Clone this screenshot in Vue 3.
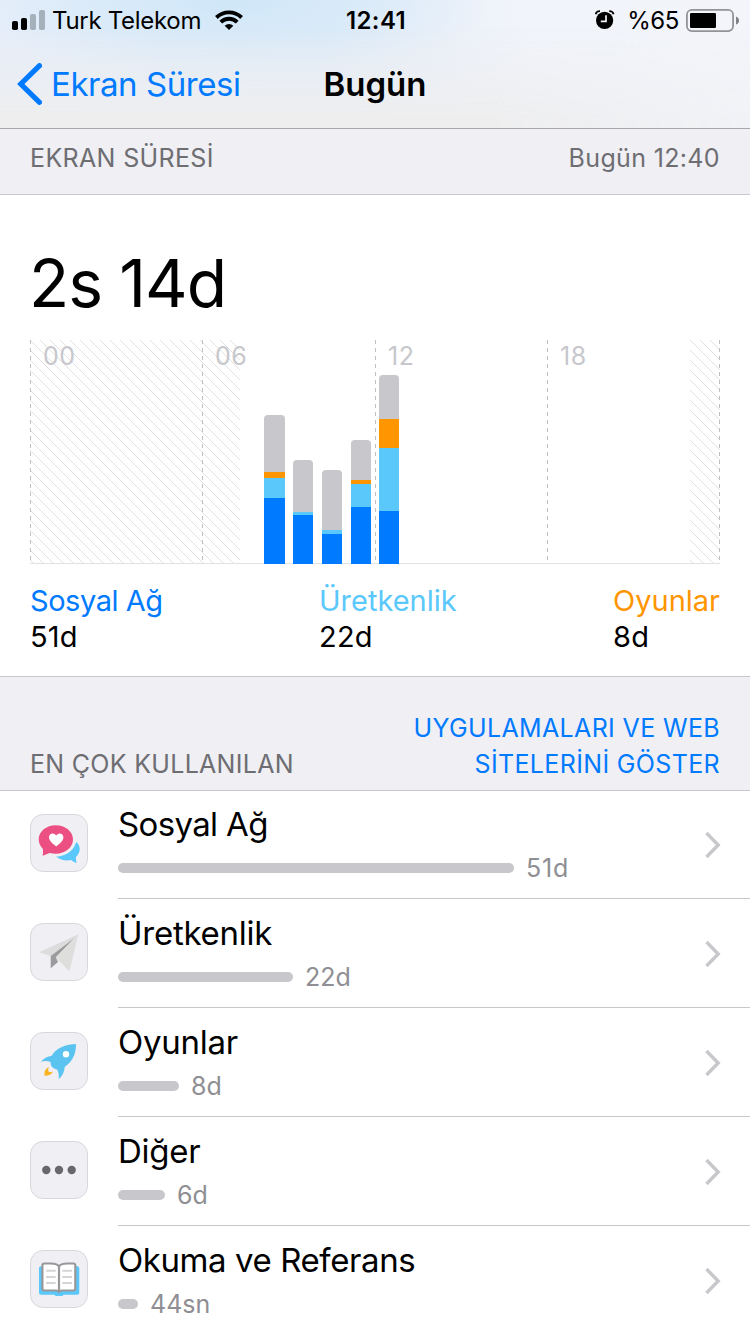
<script setup>
const hours = [
  { x: 0.5, label: '00' },
  { x: 172.5, label: '06' },
  { x: 345.5, label: '12' },
  { x: 517.5, label: '18' },
  { x: 689.5, label: '' },
]

const colors = { other: '#c7c7cc', games: '#ff9500', work: '#5ac8fa', social: '#007aff' }

const bars = [
  { x: 234, w: 21, other: 57, games: 6, work: 20, social: 66 },
  { x: 263, w: 20, other: 52, games: 0, work: 3, social: 49 },
  { x: 292, w: 20, other: 60, games: 0, work: 4, social: 30 },
  { x: 321, w: 20, other: 40, games: 4, work: 23, social: 57 },
  { x: 349, w: 20, other: 44, games: 29, work: 63, social: 53 },
].map((b) => {
  let y = 224
  const segments = ['social', 'work', 'games'].filter((k) => b[k]).map((k) => {
    y -= b[k]
    return { y, h: b[k], fill: colors[k] }
  })
  const top = y - b.other
  const cap = `M${b.x} ${y}V${top + 4}q0-4 4-4h${b.w - 8}q4 0 4 4V${y}z`
  return { ...b, segments, cap }
})

const legend = [
  { name: 'Sosyal Ağ', time: '51d', kind: 'social' },
  { name: 'Üretkenlik', time: '22d', kind: 'work' },
  { name: 'Oyunlar', time: '8d', kind: 'games' },
]

const rows = [
  { name: 'Sosyal Ağ', time: '51d', width: 396, icon: 'chat' },
  { name: 'Üretkenlik', time: '22d', width: 175, icon: 'plane' },
  { name: 'Oyunlar', time: '8d', width: 61, icon: 'rocket' },
  { name: 'Diğer', time: '6d', width: 47, icon: 'dots' },
  { name: 'Okuma ve Referans', time: '44sn', width: 20, icon: 'book' },
]
</script>

<template>
  <div class="screen">
    <header class="top">
      <div class="status">
        <div class="side">
          <svg class="signal" width="33" height="20" viewBox="0 0 33 20">
            <rect x="0" y="11" width="6" height="9" rx="1.8" />
            <rect x="9" y="8" width="6" height="12" rx="1.8" />
            <rect x="18" y="4" width="6" height="16" rx="1.8" fill="#a5b1bb" />
            <rect x="27" y="0" width="6" height="20" rx="1.8" fill="#a5b1bb" />
          </svg>
          <span class="carrier">Turk Telekom</span>
          <svg class="wifi" width="28" height="20" viewBox="0 0 28 20">
            <g fill="none" stroke="#000" stroke-width="3.9">
              <path d="M1.4 7.500a18 18 0 0 1 25.200 0" />
              <path d="M5.800 12.200a11.600 11.600 0 0 1 16.400 0" />
            </g>
            <path d="M14 20l-4.300-4.200a6.100 6.100 0 0 1 8.600 0z" />
          </svg>
        </div>
        <span class="clock">12:41</span>
        <div class="side right">
          <svg class="alarm" width="20" height="20" viewBox="0 0 20 20">
            <circle cx="9.6" cy="10.4" r="8.6" />
            <path d="M.6 4.2Q1.5 1 5 1.1M18.6 4.2Q17.7 1 14.2 1.1" fill="none" stroke="#000" stroke-width="1.7" />
            <path d="M11 5.2v6.2H5.8" fill="none" stroke="#f3f5f9" stroke-width="1.7" />
          </svg>
          <span class="percent">%65</span>
          <svg class="battery" width="54" height="24" viewBox="0 0 54 24">
            <rect x=".9" y=".9" width="46.2" height="21.2" rx="5" fill="none" stroke="#929397" stroke-width="1.8" />
            <rect x="4" y="4" width="26" height="15" rx="1.2" />
            <path d="M50 7.5q3 1 3 4t-3 4z" fill="#808186" />
          </svg>
        </div>
      </div>
      <nav class="nav">
        <a class="back">
          <svg width="26" height="42" viewBox="0 0 26 42">
            <path d="M23.500 2.700L4.800 21l18.700 18.300" fill="none" stroke="#007aff" stroke-width="5.200" stroke-linecap="round" />
          </svg>
          <span>Ekran Süresi</span>
        </a>
        <h1>Bugün</h1>
      </nav>
    </header>

    <div class="section first">
      <span class="sec-a">EKRAN SÜRESİ</span>
      <span class="sec-b">Bugün 12:40</span>
    </div>

    <section class="usage">
      <div class="total">2s 14d</div>
      <svg class="chart" width="690" height="224" viewBox="0 0 690 224">
        <defs>
          <pattern id="hatch" width="10" height="10" patternUnits="userSpaceOnUse">
            <path d="M-1 -1L11 11M9 -1L11 1M-1 9L1 11" stroke="#e1e1e4" stroke-width="1" />
          </pattern>
        </defs>
        <rect width="210" height="223" fill="url(#hatch)" />
        <rect x="660" width="30" height="223" fill="url(#hatch)" />
        <path d="M0 223.5H690" stroke="#e2e2e6" />
        <g v-for="h in hours" :key="h.x">
          <path :d="`M${h.x} 0V220`" stroke="#c0c0c4" stroke-dasharray="4 4" />
          <text :x="h.x + 12.5" y="25" class="hour">{{ h.label }}</text>
        </g>
        <g v-for="b in bars" :key="b.x">
          <path :d="b.cap" fill="#c7c7cc" />
          <rect v-for="s in b.segments" :key="s.y" :x="b.x" :y="s.y" :width="b.w" :height="s.h" :fill="s.fill" />
        </g>
      </svg>
      <div class="legend">
        <div v-for="l in legend" :key="l.name">
          <div :class="['cat', l.kind]">{{ l.name }}</div>
          <div class="spent">{{ l.time }}</div>
        </div>
      </div>
    </section>

    <div class="section second">
      <span class="sec-c">EN ÇOK KULLANILAN</span>
      <a class="show">UYGULAMALARI VE WEB<br />SİTELERİNİ GÖSTER</a>
    </div>

    <ul class="list">
      <li v-for="r in rows" :key="r.name">
        <svg class="icon" width="58" height="58" viewBox="0 0 58 58">
          <rect x=".5" y=".5" width="57" height="57" rx="12.5" fill="#efeff4" stroke="#d8d8dc" />
          <g v-if="r.icon === 'chat'">
            <path d="M46.3 28Q49.7 31 49.7 35.3Q49.6 39.5 45.9 43Q45.8 46 46.6 49Q43 48 41.2 46Q33 47.600 26 42.700Q42 41.500 46.300 28z" fill="#5ac8fa" />
            <path d="M25.8 11.3c9.5 0 17.2 6.2 17.2 14.2s-7.700 14.200-17.200 14.200q-3.300 0-6-.8-3 1.300-7.100 2.800.5-3.500.2-6.800C10.300 32.300 8.700 29 8.700 25.500c0-8 7.600-14.200 17.100-14.200z" fill="#ec4f81" />
            <path d="M26.2 32.400C22.500 29.600 19 26.700 19 23.300c0-4 5-5.300 7.200-1.700 2.200-3.600 7.200-2.300 7.200 1.700 0 3.400-3.500 6.300-7.200 9.100z" fill="#fff" />
          </g>
          <g v-else-if="r.icon === 'plane'">
            <path d="M48 11.500L9 29.200 20.700 33 44 15.500 25.800 34.300 39.300 48z" fill="#dcdcdc" />
            <path d="M44.500 15L20.700 33V45.300L28 39 25.800 34.300z" fill="#9b9b9d" />
            <path d="M48 11.500L25.800 34.500 39.300 48z" fill="#dededd" />
          </g>
          <g v-else-if="r.icon === 'rocket'">
            <path d="M46 12C37 12.500 27 14.500 21.500 24 17.500 24.300 13.500 26.500 11 29.700c3.500-1 7-.8 9.600.3-.4 3 1.500 6.500 6.400 7.500 1.800 2.500 2.200 6 1.600 9.700C32.200 44 34.500 40 34.700 35 43.500 28.500 46 21 46 12z" fill="#5ac3f0" />
            <circle cx="36" cy="22.300" r="3.200" fill="#fff" />
            <path d="M19 35C15.300 36.500 13.800 40 14.700 43.700 18.600 43.800 21.700 42.500 22.900 39.500 21.200 40.300 20 40.300 18.600 39.700 18 38.200 18.200 36.700 19 35z" fill="#fbb321" />
          </g>
          <g v-else-if="r.icon === 'dots'" fill="#68686a">
            <circle cx="16.300" cy="29" r="4.200" />
            <circle cx="29" cy="29" r="4.200" />
            <circle cx="41.700" cy="29" r="4.200" />
          </g>
          <g v-else>
            <path d="M11 16.300H47.300q2 0 2 2V42.700q0 2-2 2H33.500q-.5 1.300-2 1.300h-5q-1.500 0-2-1.300H11q-2 0-2-2V18.300q0-2 2-2z" fill="#5ac8fa" />
            <path d="M29 16.200Q26.500 13.500 21 13.500H14.500q-2.100 0-2.100 2V38.500q0 2 2.100 2H26q2 0 3 1.500 1-1.500 3-1.500H43.200q2.100 0 2.100-2V15.500q0-2-2.100-2H37Q31.500 13.500 29 16.200z" fill="#fff" stroke="#98989a" stroke-width="2.200" />
            <path d="M29 16V42" stroke="#98989a" stroke-width="2.200" />
            <path d="M16 20.700h9.700M16 27h9.700M16 33h9.700M32.300 20.700H42M32.300 27H42M32.300 33H42" stroke="#d5d5d7" stroke-width="2" />
          </g>
        </svg>
        <div class="body">
          <div class="info">
            <div :class="['name', r.icon]">{{ r.name }}</div>
            <div class="meter">
              <i class="bar" :style="{ width: r.width + 'px' }"></i>
              <span :class="['time', r.icon]">{{ r.time }}</span>
            </div>
          </div>
          <svg class="chev" width="17" height="28" viewBox="0 0 17 28">
            <path d="M2.500 2L14.200 14 2.500 26" fill="none" stroke="#c7c7cc" stroke-width="3.400" />
          </svg>
        </div>
      </li>
    </ul>
  </div>
</template>

<style>
body {
  margin: 0;
  background: #fff;
}
</style>

<style scoped>
.screen {
  width: 750px;
  height: 1334px;
  overflow: hidden;
  background: #fff;
  color: #000;
  font-family: Inter, "Liberation Sans", sans-serif;
}
.top {
  box-sizing: border-box;
  height: 129px;
  border-bottom: 1px solid #a7a7ac;
  background:
    radial-gradient(ellipse 260px 90px at 230px 0, #cfe7f8 0%, #d3e8f8aa 45%, #d8e9f800 100%),
    linear-gradient(90deg, #e6eefa 0, #e3edf9 45%, #f1f4fa 70%, #f3f5fa 100%);
  position: relative;
}
.top::before {
  content: "";
  position: absolute;
  inset: 0;
  background: linear-gradient(180deg, #eeeeef00 20%, #eeeeef 92%);
  -webkit-mask-image: linear-gradient(90deg, #000 65%, #0005 100%);
  mask-image: linear-gradient(90deg, #000 65%, #0005 100%);
}
.status,
.nav {
  position: relative;
  display: grid;
  grid-template-columns: 1fr auto 1fr;
  align-items: center;
}
.status {
  height: 40px;
  padding: 0 10px 0 12px;
}
.side {
  display: flex;
  align-items: center;
}
.right {
  justify-content: flex-end;
}
.carrier {
  margin-left: 7px;
  font-size: 24px;
  letter-spacing: -0.3px;
  white-space: nowrap;
}
.wifi {
  margin-left: 14px;
}
.clock {
  font-size: 24px;
  font-weight: 600;
  letter-spacing: 0.4px;
}
.percent {
  margin: 0 7px 0 12px;
  font-size: 24px;
  letter-spacing: -0.4px;
}
.battery {
  margin-top: 2px;
}
.nav {
  height: 88px;
}
.back {
  display: flex;
  align-items: center;
  padding-left: 16px;
  gap: 9px;
  color: #007aff;
  font-size: 33px;
  letter-spacing: -0.45px;
  white-space: nowrap;
}
h1 {
  margin: 0;
  font-size: 33px;
  font-weight: 600;
}
.section {
  display: flex;
  justify-content: space-between;
  box-sizing: border-box;
  padding: 0 30px;
  background: #efeff4;
  color: #6d6d72;
  font-size: 25px;
  line-height: 36px;
  letter-spacing: 0.35px;
}
.first {
  height: 66px;
  padding-top: 11px;
  border-bottom: 1px solid #c8c7cc;
}
.second {
  height: 114px;
  padding-top: 33px;
  border-top: 1px solid #c8c7cc;
  align-items: flex-start;
}
.sec-c {
  margin-top: 36px;
  letter-spacing: 0.3px;
}
.show {
  color: #007aff;
  text-align: right;
}
.usage {
  box-sizing: border-box;
  height: 481px;
  padding: 48px 30px 0;
}
.total {
  height: 82px;
  margin-left: -1px;
  font-size: 66px;
  line-height: 81px;
  letter-spacing: -1.1px;
}
.chart {
  display: block;
  margin-top: 15px;
}
.hour {
  font-size: 25px;
  letter-spacing: 0.5px;
  fill: #c7c7cc;
}
.legend {
  display: flex;
  justify-content: space-between;
  margin-top: 19px;
  font-size: 29px;
  line-height: 36px;
}
.cat.social { color: #007aff; letter-spacing: -0.45px; }
.cat.work { color: #5ac8fa; }
.cat.games { color: #ff9500; }
.spent {
  letter-spacing: 0.2px;
}
.list {
  margin: 0;
  padding: 0;
  list-style: none;
}
.list li {
  display: flex;
  height: 109px;
  padding-left: 30px;
}
.icon {
  flex: none;
  margin: 24px 30px 0 0;
}
.body {
  flex: 1;
  display: flex;
  justify-content: space-between;
  box-sizing: border-box;
  border-bottom: 1px solid #c8c7cc;
}
.list li:first-child {
  background: linear-gradient(#c8c7cc, #c8c7cc) 0 0 / 100% 1px no-repeat;
}
.name {
  margin-top: 13px;
  font-size: 33px;
  line-height: 42px;
  letter-spacing: -0.25px;
  white-space: nowrap;
}
.name.chat { letter-spacing: -0.65px; }
.name.book { letter-spacing: -0.42px; }
.meter {
  display: flex;
  align-items: center;
  gap: 12px;
  height: 32px;
  margin-top: 7px;
  color: #8e8e93;
  font-size: 25px;
}
.time.chat { letter-spacing: 0.8px; }
.bar {
  height: 10px;
  border-radius: 5px;
  background: #c7c7cc;
}
.chev {
  margin: 41px 29px 0 0;
}
</style>
